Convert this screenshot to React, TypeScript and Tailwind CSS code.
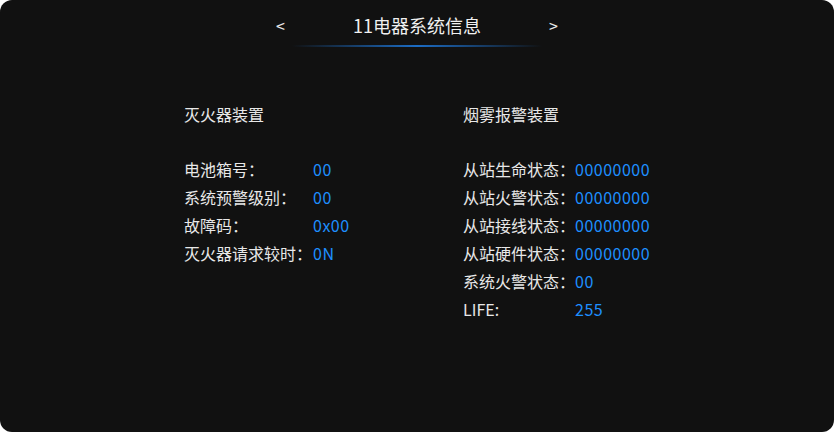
const leftRows = [
  { label: '电池箱号：', value: '00' },
  { label: '系统预警级别：', value: '00' },
  { label: '故障码：', value: '0x00' },
  { label: '灭火器请求较时：', value: '0N' },
]

const rightRows = [
  { label: '从站生命状态：', value: '00000000' },
  { label: '从站火警状态：', value: '00000000' },
  { label: '从站接线状态：', value: '00000000' },
  { label: '从站硬件状态：', value: '00000000' },
  { label: '系统火警状态：', value: '00' },
  { label: 'LIFE:', value: '255' },
]

function Section({
  title,
  rows,
  labelWidth,
}: {
  title: string
  rows: { label: string; value: string }[]
  labelWidth: string
}) {
  return (
    <div className="flex flex-col">
      <h3 className="text-[16px] leading-6 text-[#e8e8e8] font-normal">{title}</h3>
      <div className="mt-[29px] flex flex-col">
        {rows.map((r) => (
          <div key={r.label} className="flex h-7 items-center text-[16px] whitespace-nowrap">
            <span className={`${labelWidth} shrink-0 text-[#e8e8e8]`}>{r.label}</span>
            <span className="tracking-[0.5px] text-[#1e8fff]">{r.value}</span>
          </div>
        ))}
      </div>
    </div>
  )
}

export default function App() {
  return (
    <div className="h-[432px] w-[834px] bg-white">
      <div
        className="flex h-full w-full flex-col rounded-xl bg-[#111111]"
        style={{ fontFamily: '"Noto Sans CJK SC", "Noto Sans", sans-serif' }}
      >
        {/* header */}
        <div className="flex flex-col items-center pt-[13px]">
          <div className="flex items-center gap-[68px] text-[18px] leading-6 text-[#f0f0f0]">
            <button className="text-[16px] text-[#e8e8e8]">&lt;</button>
            <span>11电器系统信息</span>
            <button className="text-[16px] text-[#e8e8e8]">&gt;</button>
          </div>
          <div className="mt-[8px] h-[2px] w-[250px] bg-gradient-to-r from-transparent via-[#1c6cc4] to-transparent" />
        </div>

        {/* body */}
        <div className="mt-[55px] flex pl-[184px]">
          <div className="w-[279px]">
            <Section title="灭火器装置" rows={leftRows} labelWidth="w-[129px]" />
          </div>
          <Section title="烟雾报警装置" rows={rightRows} labelWidth="w-[112px]" />
        </div>
      </div>
    </div>
  )
}
